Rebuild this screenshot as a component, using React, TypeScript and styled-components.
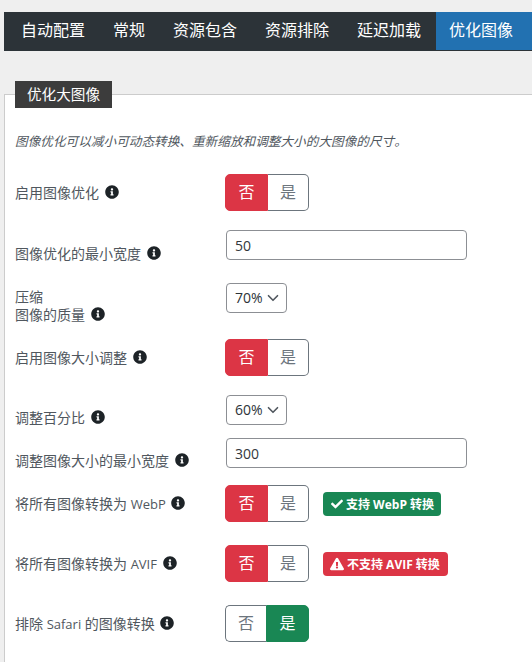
import { FaCheck, FaExclamationTriangle, FaInfoCircle } from 'react-icons/fa'
import styled, { createGlobalStyle } from 'styled-components'

const TABS = ['自动配置', '常规', '资源包含', '资源排除', '延迟加载', '优化图像']

export default function App() {
  return (
    <>
      <GlobalStyle />
      <Page>
        <Tabs>
          {TABS.map((tab, i) => (
            <Tab key={tab} $active={i === TABS.length - 1}>
              {tab}
            </Tab>
          ))}
        </Tabs>
        <Panel>
          <Legend>优化大图像</Legend>
          <Description>图像优化可以减小可动态转换、重新缩放和调整大小的大图像的尺寸。</Description>

          <Row $height={37} $mb={19} $center>
            <Label>
              启用图像优化 <Info />
            </Label>
            <Toggle value='no' />
          </Row>

          <Row $height={33} $mb={20}>
            <Label>
              图像优化的最小宽度 <Info />
            </Label>
            <TextInput defaultValue='50' />
          </Row>

          <Row $height={41} $mb={15}>
            <Label>
              压缩
              <br />
              图像的质量 <Info />
            </Label>
            <Select>70%<Chevron /></Select>
          </Row>

          <Row $height={37} $mb={19} $center>
            <Label>
              启用图像大小调整 <Info />
            </Label>
            <Toggle value='no' />
          </Row>

          <Row $height={32} $mb={11}>
            <Label>
              调整百分比 <Info />
            </Label>
            <Select>60%<Chevron /></Select>
          </Row>

          <Row $height={32} $mb={15}>
            <Label>
              调整图像大小的最小宽度 <Info />
            </Label>
            <TextInput defaultValue='300' />
          </Row>

          <Row $height={37} $mb={23} $center>
            <Label>
              将所有图像转换为 <Latin>WebP</Latin> <Info />
            </Label>
            <Controls>
              <Toggle value='no' />
              <Badge $tone='ok'>
                <FaCheck size={12} />
                支持 WebP 转换
              </Badge>
            </Controls>
          </Row>

          <Row $height={37} $mb={23} $center>
            <Label>
              将所有图像转换为 <Latin>AVIF</Latin> <Info />
            </Label>
            <Controls>
              <Toggle value='no' />
              <Badge $tone='bad'>
                <FaExclamationTriangle size={14} />
                不支持 AVIF 转换
              </Badge>
            </Controls>
          </Row>

          <Row $height={37} $mb={23} $center>
            <Label>
              排除 <Latin>Safari</Latin> 的图像转换 <Info />
            </Label>
            <Toggle value='yes' />
          </Row>
        </Panel>
      </Page>
    </>
  )
}

function Toggle({ value }: { value: 'no' | 'yes' }) {
  return (
    <ToggleGroup>
      <ToggleButton $on={value === 'no'} $color='#dc3545' $wide={value === 'no'}>
        否
      </ToggleButton>
      <ToggleButton $on={value === 'yes'} $color='#198754' $wide={value === 'yes'}>
        是
      </ToggleButton>
    </ToggleGroup>
  )
}

function Chevron() {
  return (
    <svg width='12' height='12' viewBox='0 0 16 16' fill='none'>
      <path d='M2 5l6 6 6-6' stroke='#50575e' strokeWidth='2.2' strokeLinecap='round' strokeLinejoin='round' />
    </svg>
  )
}

const GlobalStyle = createGlobalStyle`
  html, body {
    margin: 0;
    height: 662px;
    overflow: hidden;
    background: #efefef;
  }
  * {
    box-sizing: border-box;
  }
`

const Page = styled.div`
  width: 532px;
  padding: 12px 0 0 4px;
  font-family: 'Open Sans', 'Noto Sans CJK SC', sans-serif;
  color: #50575e;
`

const Tabs = styled.nav`
  display: flex;
  height: 39px;
  padding-left: 3px;
  background: #2c3338;
`

const Tab = styled.div<{ $active?: boolean }>`
  flex: ${(p) => (p.$active ? '1' : 'none')};
  height: 38px;
  margin-left: ${(p) => (p.$active ? '1px' : '0')};
  padding: 0 ${(p) => (p.$active ? '13px' : '14px')};
  font-size: 16px;
  line-height: 37px;
  color: #fff;
  background: ${(p) => (p.$active ? '#2271b1' : 'transparent')};
`

const Panel = styled.fieldset`
  width: 540px;
  min-width: 0;
  margin: 30px 0 0;
  padding: 0 10px;
  border: 0;
  border-top: 1px solid #ccc;
  border-left: 1px solid #ccc;
  background: #fff;
`

const Legend = styled.legend`
  height: 27px;
  padding: 0 12px;
  font-size: 14.6px;
  line-height: 27px;
  color: #fff;
  background: #3c3c3c;
`

const Description = styled.p`
  margin: 23px 0;
  font-size: 12.65px;
  line-height: 20px;
  font-style: italic;
`

const Row = styled.div<{ $height: number; $mb: number; $center?: boolean }>`
  display: grid;
  grid-template-columns: 210px 1fr;
  height: ${(p) => p.$height}px;
  margin-bottom: ${(p) => p.$mb}px;

  & > :first-child {
    align-self: ${(p) => (p.$center ? 'center' : 'end')};
  }
`

const Label = styled.div`
  font-size: 14px;
  line-height: 18px;
  white-space: nowrap;
`

const Latin = styled.span`
  font-size: 13px;
`

const Info = styled(FaInfoCircle)`
  width: 14px;
  height: 14px;
  margin-left: 2px;
  vertical-align: -1px;
  color: #1d2327;
`

const Controls = styled.div`
  display: flex;
  align-items: center;
  gap: 14px;
`

const ToggleGroup = styled.div`
  display: inline-flex;
  width: 84px;
  height: 37px;
`

const ToggleButton = styled.div<{ $on: boolean; $color: string; $wide: boolean }>`
  flex: ${(p) => (p.$wide ? '0 0 43px' : '1')};
  font-size: 16px;
  line-height: 35px;
  text-align: center;
  border: 1px solid ${(p) => (p.$on ? p.$color : '#6c757d')};
  color: ${(p) => (p.$on ? '#fff' : '#6c757d')};
  background: ${(p) => (p.$on ? p.$color : '#fff')};

  &:first-child {
    border-radius: 5px 0 0 5px;
    border-right-width: ${(p) => (p.$on ? '1px' : '0')};
  }
  &:last-child {
    border-radius: 0 5px 5px 0;
    border-left-width: ${(p) => (p.$on ? '1px' : '0')};
  }
`

const TextInput = styled.input`
  width: 241px;
  height: 30px;
  margin-left: 1px;
  padding: 0 8px;
  font: 14px 'Open Sans', sans-serif;
  color: #32373c;
  border: 1px solid #8c8f94;
  border-radius: 4px;
  background: #fff;
  outline: none;
`

const Select = styled.div`
  display: inline-flex;
  align-items: center;
  justify-content: space-between;
  width: 61px;
  height: 30px;
  margin-left: 1px;
  padding: 0 7px 1px 8px;
  font-size: 14px;
  color: #2c3338;
  border: 1px solid #8c8f94;
  border-radius: 4px;
  background: #fff;
`

const Badge = styled.span<{ $tone: 'ok' | 'bad' }>`
  display: inline-flex;
  align-items: center;
  gap: 3px;
  height: 24px;
  padding: ${(p) => (p.$tone === 'ok' ? '0 7px 0 8px' : '0 8px 0 7px')};
  font-size: 12px;
  font-weight: 700;
  color: #fff;
  border-radius: 4px;
  background: ${(p) => (p.$tone === 'ok' ? '#198754' : '#dc3545')};
`
